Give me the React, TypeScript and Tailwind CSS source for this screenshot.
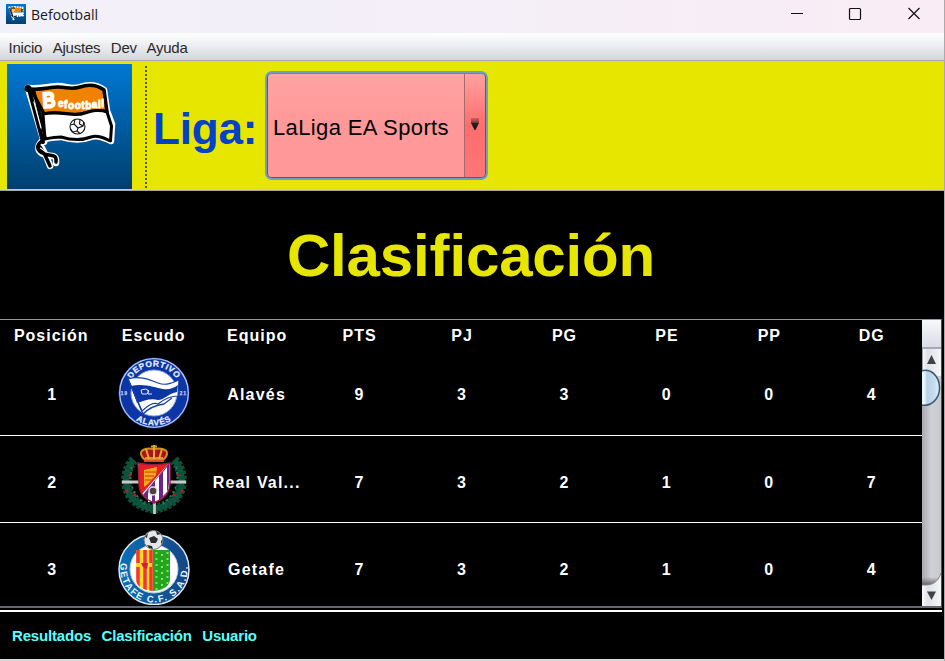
import React from "react";

const columns = ["Posición", "Escudo", "Equipo", "PTS", "PJ", "PG", "PE", "PP", "DG"];

function FlagLogo({ className }: { className: string }) {
  return (
    <svg viewBox="0 0 125 125" className={className}>
      <defs>
        <linearGradient id="sky" x1="0" y1="0" x2="0" y2="1">
          <stop offset="0" stopColor="#0078d4" />
          <stop offset="1" stopColor="#003f6e" />
        </linearGradient>
      </defs>
      <rect width="125" height="125" fill="url(#sky)" />
      <g fill="none" stroke="#fff" strokeWidth="6.500" strokeLinejoin="round" strokeLinecap="round">
        <path d="M21 24 C35 25 43 22 51 22 C60 22 64 26 73 23 C82 20 90 21 97 26 L100 47 L105 60 L104 77 C97 74 91 71 84 73 C74 77 64 76 54 73 C48 73 43 74 38 75 Z" />
        <path d="M21 24 L37 78 M35 77 C30 82 30 87 36 90 C43 94 50 88 49 99 M35 84 C38 90 40 93 43 102" />
      </g>
      <path d="M24 25 C35 26 43 23 51 23 C60 23 64 26 73 23 C82 20 90 21 97 26 L100 48 C92 45 85 47 78 49 C66 54 55 46 37 50 Z" fill="#f08200" stroke="#000" strokeWidth="3.500" strokeLinejoin="round" />
      <path d="M36 50 C55 46 66 54 78 49 C85 47 92 45 100 48 L104.500 62 L103.500 77 C97 74 91 71 84 73 C74 77 64 76 54 73 C48 73 43 74 38 75 Z" fill="#fff" stroke="#000" strokeWidth="3" strokeLinejoin="round" />
      <g fill="none" stroke="#000" strokeLinecap="round" strokeLinejoin="round">
        <path d="M22 25 L36 78" strokeWidth="4" />
        <path d="M27 27 L38 73" strokeWidth="3" />
        <path d="M35 77 C29 81 29 87 37 89.500 C44 93 50 89 49 98 M33 83 L38 91 L43 102" strokeWidth="3.500" />
        <path d="M27 38 L34 64" stroke="#fff" strokeWidth="1.200" />
        <path d="M33.500 84 L39 88" stroke="#fff" strokeWidth="1.200" />
      </g>
      <circle cx="21" cy="24.500" r="3.500" />
      <text x="36" y="44" fill="#fff" stroke="#fff" strokeWidth="1.800" fontFamily="Liberation Sans, sans-serif" fontWeight="700" fontSize="22" transform="rotate(-4 36 44)" textLength="13" lengthAdjust="spacingAndGlyphs">B</text>
      <text x="51" y="43 44 45 45 45 44.500 44 43.500 43" fill="#fff" stroke="#fff" strokeWidth=".8" fontFamily="Liberation Sans, sans-serif" fontWeight="700" fontSize="10" textLength="46">efootball</text>
      <g fill="none" stroke="#111" strokeWidth="1.100">
        <circle cx="70.500" cy="62.500" r="7.500" />
        <path d="M68 55.500 L67 60 L71 64 L76 62 L77 58 M73 55.500 L72.500 60 L76 62 M67 60 L63.500 61 M71 64 L70 67 L73 69.500 M70 67 L66 68 L63.500 65" />
      </g>
    </svg>
  );
}

function WindowIcon() {
  return (
    <svg viewBox="0 0 20 20" className="mb-[5px] h-5 w-5">
      <rect width="20" height="20" fill="url(#sky)" />
      <path d="M2.500 3.500 L9 3 L16.500 3.500 L17 11.500 L7 12.500 M3.500 4 L6.500 13 L8 16.500" fill="none" stroke="#fff" strokeWidth="1.800" strokeDasharray="2 .7" />
      <path d="M5 4 L12 3.700 L16 4 L16 8 L6 8.500 Z" fill="#f08200" />
      <path d="M6 8.500 H16 L17 12 L12 11.500 L7 12.500 Z" fill="#fff" />
      <path d="M3.500 4 L7 13 M5 4 H9 M16 5 V8 M8 12.500 L11 12" fill="none" stroke="#111" strokeWidth="1.200" />
      <path d="M7 5 V8 M8 6 H9" stroke="#fff" />
    </svg>
  );
}

function AlavesCrest() {
  return (
    <svg viewBox="0 0 72 72" className="h-[72px] w-[72px]">
      <defs>
        <path id="alavesTop" d="M9.500 36 A26.500 26.500 0 0 1 62.500 36" />
        <path id="alavesBottom" d="M3.500 36 A32.500 32.500 0 0 0 68.500 36" />
      </defs>
      <circle cx="36" cy="36" r="35.500" fill="#0c35a5" />
      <circle cx="36" cy="36" r="34.300" fill="none" stroke="#b3c5f0" strokeWidth="1.300" />
      <circle cx="36" cy="36" r="23" fill="#fff" stroke="#8ea7e2" />
      <g fill="#e8eeff" stroke="#e8eeff" strokeWidth=".25" fontFamily="Liberation Sans, sans-serif" fontWeight="700" fontSize="8.300" textAnchor="middle">
        <text letterSpacing=".5"><textPath href="#alavesTop" startOffset="50%">DEPORTIVO</textPath></text>
        <text letterSpacing=".8"><textPath href="#alavesBottom" startOffset="50%">ALAVÉS</textPath></text>
        <text x="6.500" y="38" fontSize="4.500" opacity=".8">19</text>
        <text x="65.500" y="38" fontSize="4.500" opacity=".8">21</text>
      </g>
      <path d="M10 22 C23 18 34 24 40 26 C48 29 54 26 61 23 L60 39 C51 39 45 43 40 47 C33 44 27 52 24 54 Z" fill="#fff" stroke="#1740a8" strokeWidth="1.200" />
      <path d="M13 29 C27 26 37 31 45 32 C51 33 56 31 60 28 L59 35 C51 36 46 43 40 43 C32 41 26 44 19 46 Z" fill="#0c35a5" />
      <path d="M10 22 L25 57 C32 50 38 48 46 47 L54 41" fill="none" stroke="#1740a8" strokeWidth="1.300" />
      <path d="M23 33 L28 32 L31 34 L29 37 L24 37 Z M30 33 V37 H34" fill="none" stroke="#dbe4fc" />
    </svg>
  );
}

function ValladolidCrest() {
  return (
    <svg viewBox="0 0 72 72" className="h-[72px] w-[72px]">
      <g fill="none" stroke="#11583f">
        <path d="M16 15 C7 24 5 41 14 53 C20 60 28 62 36 64 M56 15 C65 24 67 41 58 53 C52 60 44 62 36 64" strokeWidth="6" />
        <path d="M16 15 C7 24 5 41 14 53 C20 60 28 62 36 64 M56 15 C65 24 67 41 58 53 C52 60 44 62 36 64" strokeWidth="10" strokeDasharray="3 1.500" stroke="#0d5039" />
        <path d="M14 22 C10 36 14 49 28 60 M58 22 C62 36 58 49 44 60" strokeWidth="2" strokeDasharray="2 3" stroke="#2a7d5c" />
      </g>
      <path d="M4 37 H68 M36.500 51 V69" stroke="#c9c9c9" strokeWidth="2.800" />
      <path d="M20 18 C30 20 42 20 52 18 V37 C52 48 47 53 36 58 C25 53 21 48 21 38 Z" fill="#fff" />
      <path d="M51 18 V37 C51 48 46 53 36 58 C31 56 27 53 25 50 Z" fill="#6c258c" />
      <path d="M30 48 L30 57 L34 57 L34 44 Z M37 36 L41 31 V55 L37 57 Z M45 27 L49 22 V47 L45 51 Z" fill="#fff" />
      <path d="M21 18 C30 20 42 20 51 18 L24 49 C20 43 21 35 21 18 Z" fill="#e51f20" />
      <path d="M26 25 L39 22 L38 30 L30 39 L26 42 Z" fill="#f5a91f" />
      <path d="M27 27 H38 M27 31 H36 M27 35 H34" stroke="#dd5a17" strokeWidth="1.300" />
      <path d="M20 18 C30 20 42 20 52 18 V37 C52 48 47 53 36 58 C25 53 21 48 21 38 Z" fill="none" stroke="#971e42" strokeWidth="1.400" />
      <circle cx="35" cy="46" r="4" fill="#444" stroke="#ddd" strokeWidth="1.500" />
      <path d="M27 15 C18 7 25 2 36 4 C47 2 54 7 45 15 Z" fill="#a9131e" stroke="#cf911d" strokeWidth="2" />
      <path d="M36 0 V14 M28 4 L31 14 M44 4 L41 14 M33 1.500 H39" stroke="#dba92f" strokeWidth="2" />
      <path d="M27 13 H45" stroke="#e9b73d" strokeWidth="1.500" />
      <path d="M26 16 H46" stroke="#d84d23" strokeWidth="2" />
      <g fill="#bd1729">
        <circle cx="12" cy="30" r="1.500" /><circle cx="9" cy="46" r="1.500" /><circle cx="17" cy="50" r="1.500" />
        <circle cx="60" cy="30" r="1.500" /><circle cx="64" cy="46" r="1.500" /><circle cx="56" cy="50" r="1.500" />
      </g>
    </svg>
  );
}

function GetafeCrest() {
  return (
    <svg viewBox="0 0 72 76" className="h-[76px] w-[72px]">
      <defs>
        <path id="getafeRing" d="M3 32 A33.700 33.700 0 1 0 69 32" />
        <clipPath id="getafeShield"><path d="M18 20 H52 V49 C52 56 46 60 35 61 C24 60 18 56 18 49 Z" /></clipPath>
        <linearGradient id="getafeBlue"><stop stopColor="#0870b9" /><stop offset="1" stopColor="#164583" /></linearGradient>
      </defs>
      <circle cx="36" cy="39.500" r="35" fill="url(#getafeBlue)" stroke="#dcebf4" strokeWidth="1.500" />
      <circle cx="36" cy="39" r="24" fill="#fff" stroke="#b9ccdd" strokeWidth="1" />
      <g clipPath="url(#getafeShield)">
        <rect x="18" y="20" width="17" height="42" fill="#ffda24" />
        <path d="M20 20 V62 M27 20 V62 M33 20 V62" stroke="#ef3444" strokeWidth="3.500" />
        <path d="M18 35 H34" stroke="#ffd42a" strokeWidth="4" />
        <path d="M23 33 H30 L29 39 L25 37 Z" fill="#d41e37" />
        <rect x="35" y="20" width="18" height="42" fill="#22a51f" />
        <path d="M38.500 22 V62 M44 24 V62 M49.500 22 V62" stroke="#8bdf68" strokeWidth="2" strokeDasharray="2 4" />
      </g>
      <circle cx="35.500" cy="10" r="9.500" fill="#e4e6e7" stroke="#777" />
      <path d="M31 8 L36 6 L40 9 L38 13 L33 13 Z M27 7 L30 3 L29 8 Z M38 1 L43 4 L39 5 Z M43 11 L45 9 L43 15 Z M29 15 L34 16 L35 19 L31 18 Z" fill="#292c30" />
      <text fill="#f0f7ff" fontFamily="Liberation Sans, sans-serif" fontWeight="700" fontSize="9.500" letterSpacing="1.500"><textPath href="#getafeRing" startOffset="1">GETAFE C.F. S.A.D.</textPath></text>
    </svg>
  );
}

const rows = [
  { crest: <AlavesCrest />, team: "Alavés", values: [9, 3, 3, 0, 0, 4], height: "h-[88px]", offset: "pt-[2px]", label: "pt-1" },
  { crest: <ValladolidCrest />, team: "Real Val...", values: [7, 3, 2, 1, 0, 7], height: "h-[87px]", offset: "pt-[3px]", label: "pt-[5px]" },
  { crest: <GetafeCrest />, team: "Getafe", values: [7, 3, 2, 1, 0, 4], height: "h-[82px]", offset: "pt-[7px]", label: "pt-1" },
];

function ScrollBar() {
  return (
    <div className="flex w-[19px] flex-col bg-[#c8c8cf]">
      <div className="h-[29px] border-b-2 border-[#a5a9b5] bg-gradient-to-b from-[#f8f8fb] to-[#d9dce6]" />
      <div className="h-[257px] bg-gradient-to-r from-[#aaaab1] via-[#d0d0d6] to-[#c9c9d0]">
        <svg width="19" height="257">
          <defs>
            <linearGradient id="thumb"><stop stopColor="#ecf6fd" /><stop offset=".2" stopColor="#e6f2fb" /><stop offset=".32" stopColor="#b7d2e5" /><stop offset=".75" stopColor="#c6deef" /><stop offset="1" stopColor="#e6f7ff" /></linearGradient>
            <linearGradient id="button"><stop stopColor="#fafafd" /><stop offset=".3" stopColor="#dfe1e6" /><stop offset="1" stopColor="#f5f6f9" /></linearGradient>
            <linearGradient id="shadow" x2="0" y2="1"><stop stopColor="#666" stopOpacity="0" /><stop offset="1" stopColor="#555" /></linearGradient>
          </defs>
          <rect width="19" height="27" fill="url(#button)" />
          <path d="M0 0 V21" stroke="#a2a2ac" strokeWidth="2" />
          <path d="M9.500 6 L14 15 H5 Z" fill="#414144" />
          <path d="M-1 22 C9 19 17.500 27 17.500 39 C17.500 50 9 58 -1 56 Z" fill="url(#thumb)" stroke="#3b586f" strokeWidth="1.500" />
          <rect y="228" width="19" height="9" fill="url(#shadow)" />
          <path d="M0 236 H4 C12 236 17 231 19 224 V257 H0 Z" fill="url(#button)" />
          <path d="M0 236 H4 C12 236 17 231 19 224" fill="none" stroke="#85868e" />
          <path d="M5 242.500 H14 L9.500 251 Z" fill="#414144" />
        </svg>
      </div>
    </div>
  );
}

export default function App() {
  return (
    <div className="flex h-[661px] w-[945px] flex-col overflow-hidden border-r border-[#aaa] bg-black font-['Liberation_Sans',Arial,sans-serif] [font-variant-ligatures:none]">
      <header className="flex h-[33px] shrink-0 items-center bg-gradient-to-r from-[#f2f0f8] via-[#f4eff8] to-[#faecf5] pl-[6px]">
        <WindowIcon />
        <span className="mb-[4px] ml-[5px] font-['Open_Sans',sans-serif] text-[14px] tracking-[0.02px] text-[#191919]">Befootball</span>
        <svg width="130" height="14" className="mb-[5px] mr-[23px] ml-auto" fill="none" stroke="#111" strokeWidth="1.200">
          <path d="M0 6.500 H12 M117.500 1 L128.500 12 M128.500 1 L117.500 12" />
          <rect x="58.500" y="1.500" width="11" height="11" rx="1" />
        </svg>
      </header>

      <nav className="flex h-7 shrink-0 items-center gap-[10.500px] border-b border-[#a1a9b9] bg-gradient-to-b from-white via-[#ebecef] to-[#d4d6dc] pl-[8.500px] pt-[3px] text-[15px] tracking-[-0.22px] text-[#292929]">
        <span>Inicio</span><span>Ajustes</span><span>Dev</span><span className="-ml-px">Ayuda</span>
      </nav>

      <section className="flex h-[130px] shrink-0 items-center border-b border-[#a5a5a9] bg-[#e6e600] pl-[7px]">
        <FlagLogo className="mb-[-1px] h-[125px] w-[125px] shrink-0" />
        <svg width="2" height="123" className="mt-[3px] ml-[13px] shrink-0"><path d="M1 0 V123" stroke="#55550b" strokeWidth="2" strokeDasharray="2 2" /></svg>
        <span className="mt-[6px] ml-[6px] w-[112px] text-[44px] leading-none font-bold tracking-[-0.2px] text-[#0042c8]">Liga:</span>
        <div className="flex h-[109px] w-[223px] rounded-[7px] bg-[#6e9fc4] p-[2px]">
          <div className="flex flex-1 overflow-hidden rounded-[5px] border border-[#555d68] border-t-[#7b8589]">
            <span className="flex flex-1 items-center bg-gradient-to-b from-[#ffa3a3] via-[#ff9898] to-[#ff9999] pt-[4px] pl-[5px] text-[22px] tracking-[0.37px] whitespace-nowrap text-black">LaLiga EA Sports</span>
            <span className="flex w-[21px] items-center justify-center border-l border-[#a76b6b] bg-gradient-to-b from-[#ffa0a0] via-[#ff6d6d] to-[#ff7676]">
              <svg width="10" height="14" className="mb-[3px]"><defs><linearGradient id="arrow" x2="0" y2="1"><stop stopColor="#d65f5f" /><stop offset=".35" stopColor="#8c4040" /><stop offset=".45" stopColor="#2b2020" /><stop offset="1" stopColor="#111" /></linearGradient></defs><path d="M1 1 H9 V6 L5.500 13 H4.500 L1 6 Z" fill="url(#arrow)" /></svg>
            </span>
          </div>
        </div>
      </section>

      <h1 className="flex h-[128px] shrink-0 items-center justify-center pt-[2px] pr-[2px] text-[60px] leading-none font-bold tracking-[-0.15px] text-[#e6e600]">Clasificación</h1>

      <main className="mr-[2px] flex h-[289px] shrink-0 border-t border-r-2 border-b-2 border-t-[#929ba0] border-r-[#4c5056] border-b-[#626870] text-white">
        <div className="flex w-[922px] shrink-0 flex-col text-[16px] font-bold">
          <div className="grid h-[28px] grid-cols-9 items-center pt-[3px] text-center tracking-[1px]">
            {columns.map((column, i) => <span key={column} className={i > 1 ? "pl-[2px]" : ""}>{column}</span>)}
          </div>
          {rows.map((row, index) => (
            <div key={row.team} className={`grid grid-cols-9 items-center overflow-hidden text-center tracking-[1.2px] ${row.height} ${row.offset} ${index < 2 ? "border-b border-white" : ""}`}>
              <span className={`pl-[2px] ${row.label}`}>{index + 1}</span>
              <div className="flex justify-center pl-px">{row.crest}</div>
              <span className={`pl-px ${row.label}`}>{row.team}</span>
              {row.values.map((value, i) => <span key={i} className={`pl-[2px] ${row.label}`}>{value}</span>)}
            </div>
          ))}
        </div>
        <ScrollBar />
      </main>

      <footer className="mt-[2px] mr-[2px] flex h-[49px] shrink-0 items-center gap-[10.500px] border-t-2 border-white pt-[2px] pl-[12px] text-[15px] font-bold tracking-[-0.18px] text-[#55ffff]">
        <span>Resultados</span><span>Clasificación</span><span>Usuario</span>
      </footer>
      <div className="h-[2px] shrink-0 bg-[#d7d7d7]" />
    </div>
  );
}
